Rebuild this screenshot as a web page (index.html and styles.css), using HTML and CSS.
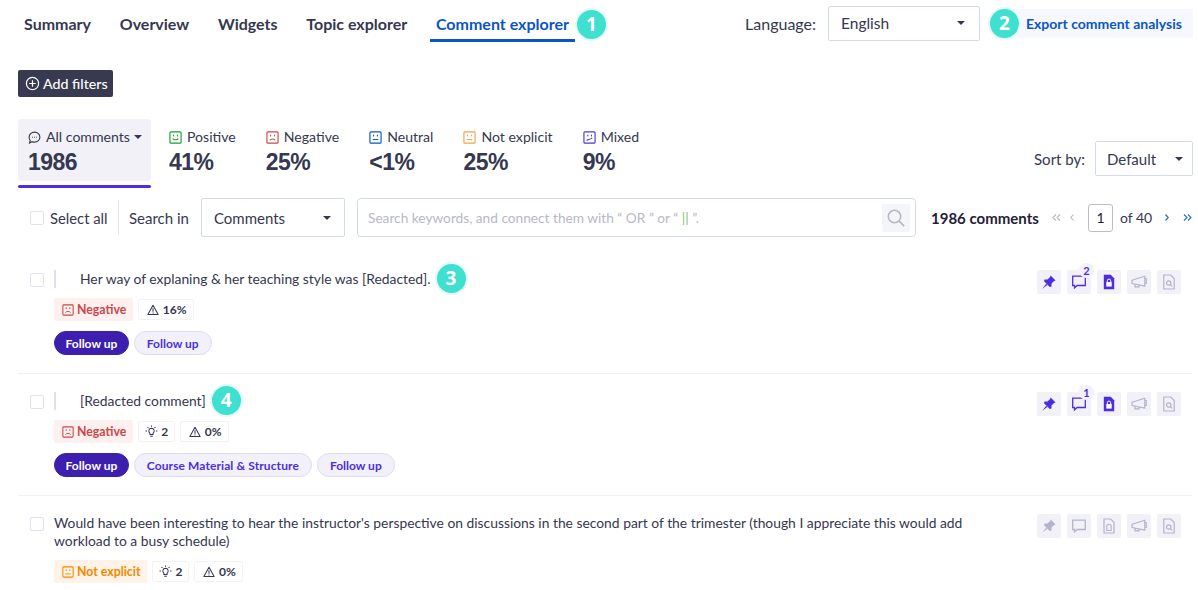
FILE: index.html
```html
<!DOCTYPE html>
<html lang="en">
<head>
<meta charset="utf-8">
<title>Comment explorer</title>
<link rel="stylesheet" href="styles.css">
</head>
<body>
<svg class="defs" width="0" height="0" aria-hidden="true">
  <symbol id="i-face-smile" viewBox="0 0 14 14"><rect x="1" y="1" width="12" height="12" rx="1" fill="none" stroke="currentColor" stroke-width="1.250"/><rect x="4.300" y="4" width="1.200" height="1.800" fill="currentColor"/><rect x="8.500" y="4" width="1.200" height="1.800" fill="currentColor"/><path d="M4 8.200c1 1.600 5 1.600 6 0" fill="none" stroke="currentColor" stroke-width="1.100"/></symbol>
  <symbol id="i-face-sad" viewBox="0 0 14 14"><rect x="1" y="1" width="12" height="12" rx="1" fill="none" stroke="currentColor" stroke-width="1.250"/><rect x="4.300" y="4" width="1.200" height="1.800" fill="currentColor"/><rect x="8.500" y="4" width="1.200" height="1.800" fill="currentColor"/><path d="M4 10c1-1.800 5-1.800 6 0" fill="none" stroke="currentColor" stroke-width="1.100"/></symbol>
  <symbol id="i-face-flat" viewBox="0 0 14 14"><rect x="1" y="1" width="12" height="12" rx="1" fill="none" stroke="currentColor" stroke-width="1.250"/><rect x="4.300" y="4" width="1.200" height="1.800" fill="currentColor"/><rect x="8.500" y="4" width="1.200" height="1.800" fill="currentColor"/><path d="M4 9.200h6" fill="none" stroke="currentColor" stroke-width="1.100"/></symbol>
  <symbol id="i-face-mixed" viewBox="0 0 14 14"><rect x="1" y="1" width="12" height="12" rx="1" fill="none" stroke="currentColor" stroke-width="1.250"/><rect x="4.600" y="4" width="1.200" height="1.800" fill="currentColor"/><rect x="8.500" y="4" width="1.200" height="1.800" fill="currentColor"/><path d="M3.800 10c1.200 0 1.600-1.200 3-1.200s1.800-.6 3.200-1.200" fill="none" stroke="currentColor" stroke-width="1.100"/></symbol>
  <symbol id="i-chat" viewBox="0 0 14 14"><path d="M7 1.200c3.300 0 5.800 2.400 5.800 5.400S10.300 12 7 12c-.9 0-1.700-.2-2.500-.5L1.600 12.800l.8-2.600C1.500 9.200 1.200 8 1.200 6.600 1.200 3.600 3.700 1.200 7 1.200z" fill="none" stroke="currentColor" stroke-width="1.200"/><path d="M4.300 6.700h1M6.500 6.700h1M8.700 6.700h1" stroke="currentColor" stroke-width="1"/></symbol>
  <symbol id="i-pin" viewBox="0 0 16 16"><path d="M9.600 1.500l5 5-1.500.6-2.600 2.500v3l-1.700.5L3 7.300l.5-1.800h3l2.600-2.500z" fill="currentColor"/><path d="M5.200 9.700L1.300 14.800l5-3.900z" fill="currentColor"/></symbol>
  <symbol id="i-bubble" viewBox="0 0 16 16"><path d="M1.700 2.200h12.600v9.300H6.200l-2.700 2.300v-2.300H1.700z" fill="none" stroke="currentColor" stroke-width="1.300"/></symbol>
  <symbol id="i-doc-lock" viewBox="0 0 16 16"><path d="M2.800.8h6.900l3.500 3.500v10.900H2.800z" fill="currentColor"/><path d="M5.300 8h5.400v4.600H5.300z" fill="#fff"/><path d="M6.300 8V6.800a1.700 1.700 0 013.400 0V8" fill="none" stroke="#fff" stroke-width="1"/></symbol>
  <symbol id="i-doc-lock-off" viewBox="0 0 16 16"><path d="M3 1h6.600L13 4.400V15H3z" fill="none" stroke="currentColor" stroke-width="1.200"/><path d="M5.800 12.500V8.400a2.200 2.200 0 014.400 0v4.100z" fill="none" stroke="currentColor" stroke-width="1.100"/></symbol>
  <symbol id="i-horn" viewBox="0 0 16 16"><path d="M1 6.200l12.800-4v10L1 9.500z" fill="none" stroke="currentColor" stroke-width="1.200" stroke-linejoin="round"/><path d="M13.800 4.500h1.400v5h-1.400M4 10v2.800h4V11" fill="none" stroke="currentColor" stroke-width="1.200"/></symbol>
  <symbol id="i-doc-find" viewBox="0 0 16 16"><path d="M2.800 1h6.900l3.500 3.500V15H2.800z" fill="none" stroke="currentColor" stroke-width="1.200"/><circle cx="7.700" cy="9" r="2.200" fill="none" stroke="currentColor" stroke-width="1.200"/><path d="M9.300 10.600l1.800 1.800" stroke="currentColor" stroke-width="1.300"/></symbol>
  <symbol id="i-warn" viewBox="0 0 14 14"><path d="M7 1.500l6 10.800H1z" fill="none" stroke="currentColor" stroke-width="1.200" stroke-linejoin="round"/><path d="M7 5v4M7 9.800v1.200" stroke="currentColor" stroke-width="1.200"/></symbol>
  <symbol id="i-bulb" viewBox="0 0 14 14"><path d="M7 3.400a3 3 0 011.700 5.400v1.500H5.300V8.800A3 3 0 017 3.400z" fill="none" stroke="currentColor" stroke-width="1.100"/><path d="M5.600 12h2.800M7 .5v1.500M2.700 2.200l1 1M11.300 2.200l-1 1M.6 6.400h1.500M11.900 6.400h1.500" stroke="currentColor" stroke-width="1.100"/></symbol>
  <symbol id="i-plus" viewBox="0 0 16 16"><circle cx="8" cy="8" r="6.500" fill="none" stroke="currentColor" stroke-width="1.300"/><path d="M8 4.500v7M4.500 8h7" stroke="currentColor" stroke-width="1.300"/></symbol>
  <symbol id="i-search" viewBox="0 0 20 20"><circle cx="8.500" cy="8.500" r="6.200" fill="none" stroke="currentColor" stroke-width="1.500"/><path d="M13 13l5.200 5.200" stroke="currentColor" stroke-width="1.700"/></symbol>
  <symbol id="i-first" viewBox="0 0 9 7"><path d="M4 .5L1 3.500l3 3M8 .5L5 3.500l3 3" fill="none" stroke="currentColor" stroke-width="1.100"/></symbol>
  <symbol id="i-prev" viewBox="0 0 4 7"><path d="M3.500.5L.8 3.500l2.700 3" fill="none" stroke="currentColor" stroke-width="1.100"/></symbol>
  <symbol id="i-next" viewBox="0 0 4 7"><path d="M.5.5l2.700 3-2.700 3" fill="none" stroke="currentColor" stroke-width="1.300"/></symbol>
  <symbol id="i-last" viewBox="0 0 9 7"><path d="M1 .5l3 3-3 3M5 .5l3 3-3 3" fill="none" stroke="currentColor" stroke-width="1.200"/></symbol>
</svg>

<main class="page">
  <header class="topbar">
    <nav class="tabs">
      <a class="tab">Summary</a>
      <a class="tab">Overview</a>
      <a class="tab">Widgets</a>
      <a class="tab">Topic explorer</a>
      <a class="tab tab-active">Comment explorer<span class="marker marker-tab">1</span></a>
    </nav>
    <div class="lang">
      <span class="lang-label">Language:</span>
      <div class="select select-lang"><span>English</span><i class="caret"></i></div>
      <a class="export"><span class="marker marker-export">2</span>Export comment analysis</a>
    </div>
  </header>

  <button class="add-filters"><svg class="ico-plus"><use href="#i-plus"/></svg>Add filters</button>

  <section class="stats">
    <div class="stat stat-all">
      <div class="stat-label"><svg class="ico-stat ink"><use href="#i-chat"/></svg>All comments<i class="caret caret-small"></i></div>
      <div class="stat-num">1986</div>
    </div>
    <div class="stat">
      <div class="stat-label"><svg class="ico-stat c-pos"><use href="#i-face-smile"/></svg>Positive</div>
      <div class="stat-num">41%</div>
    </div>
    <div class="stat">
      <div class="stat-label"><svg class="ico-stat c-neg"><use href="#i-face-sad"/></svg>Negative</div>
      <div class="stat-num">25%</div>
    </div>
    <div class="stat">
      <div class="stat-label"><svg class="ico-stat c-neu"><use href="#i-face-flat"/></svg>Neutral</div>
      <div class="stat-num">&lt;1%</div>
    </div>
    <div class="stat">
      <div class="stat-label"><svg class="ico-stat c-not"><use href="#i-face-flat"/></svg>Not explicit</div>
      <div class="stat-num">25%</div>
    </div>
    <div class="stat">
      <div class="stat-label"><svg class="ico-stat c-mix"><use href="#i-face-mixed"/></svg>Mixed</div>
      <div class="stat-num">9%</div>
    </div>
    <div class="sort">
      <span>Sort by:</span>
      <div class="select select-sort"><span>Default</span><i class="caret"></i></div>
    </div>
  </section>

  <section class="toolbar">
    <label class="check-all"><span class="check"></span>Select all</label>
    <span class="search-in">Search in</span>
    <div class="select select-in"><span>Comments</span><i class="caret"></i></div>
    <div class="search">
      <span class="search-hint">Search keywords, and connect them with “ OR ” or “ <b class="hint-or">||</b> ”.</span>
      <span class="search-btn"><svg class="ico-search"><use href="#i-search"/></svg></span>
    </div>
    <strong class="count">1986 comments</strong>
    <div class="pager">
      <svg class="chev-double pg-off"><use href="#i-first"/></svg>
      <svg class="chev-single pg-off pg-prev"><use href="#i-prev"/></svg>
      <span class="pg-box">1</span>
      <span class="pg-of">of</span>
      <span class="pg-total">40</span>
      <svg class="chev-single pg-on pg-next"><use href="#i-next"/></svg>
      <svg class="chev-double pg-on pg-last"><use href="#i-last"/></svg>
    </div>
  </section>

  <article class="row">
    <span class="check"></span>
    <div class="row-body">
      <p class="text text-quoted"><span>Her way of explaning &amp; her teaching style was [Redacted].<span class="marker marker-text">3</span></span></p>
      <div class="chips">
        <span class="chip chip-neg"><svg class="ico-chip"><use href="#i-face-sad"/></svg>Negative</span>
        <span class="chip chip-meta"><svg class="ico-warn"><use href="#i-warn"/></svg>16%</span>
      </div>
      <div class="tags">
        <span class="tag tag-solid">Follow up</span>
        <span class="tag">Follow up</span>
      </div>
    </div>
    <div class="actions">
      <span class="act act-on"><svg class="ico-act"><use href="#i-pin"/></svg></span>
      <span class="act act-on"><svg class="ico-act"><use href="#i-bubble"/></svg><em class="act-count">2</em></span>
      <span class="act act-on"><svg class="ico-act"><use href="#i-doc-lock"/></svg></span>
      <span class="act"><svg class="ico-act"><use href="#i-horn"/></svg></span>
      <span class="act"><svg class="ico-act"><use href="#i-doc-find"/></svg></span>
    </div>
  </article>

  <article class="row">
    <span class="check"></span>
    <div class="row-body">
      <p class="text text-quoted"><span>[Redacted comment]<span class="marker marker-text">4</span></span></p>
      <div class="chips">
        <span class="chip chip-neg"><svg class="ico-chip"><use href="#i-face-sad"/></svg>Negative</span>
        <span class="chip chip-meta"><svg class="ico-bulb"><use href="#i-bulb"/></svg>2</span>
        <span class="chip chip-meta"><svg class="ico-warn"><use href="#i-warn"/></svg>0%</span>
      </div>
      <div class="tags">
        <span class="tag tag-solid">Follow up</span>
        <span class="tag tag-long">Course Material &amp; Structure</span>
        <span class="tag">Follow up</span>
      </div>
    </div>
    <div class="actions">
      <span class="act act-on"><svg class="ico-act"><use href="#i-pin"/></svg></span>
      <span class="act act-on"><svg class="ico-act"><use href="#i-bubble"/></svg><em class="act-count">1</em></span>
      <span class="act act-on"><svg class="ico-act"><use href="#i-doc-lock"/></svg></span>
      <span class="act"><svg class="ico-act"><use href="#i-horn"/></svg></span>
      <span class="act"><svg class="ico-act"><use href="#i-doc-find"/></svg></span>
    </div>
  </article>

  <article class="row row-last">
    <span class="check"></span>
    <div class="row-body">
      <p class="text">Would have been interesting to hear the instructor's perspective on discussions in the second part of the trimester (though I appreciate this would add workload to a busy schedule)</p>
      <div class="chips">
        <span class="chip chip-not"><svg class="ico-chip"><use href="#i-face-flat"/></svg>Not explicit</span>
        <span class="chip chip-meta"><svg class="ico-bulb"><use href="#i-bulb"/></svg>2</span>
        <span class="chip chip-meta"><svg class="ico-warn"><use href="#i-warn"/></svg>0%</span>
      </div>
    </div>
    <div class="actions">
      <span class="act"><svg class="ico-act"><use href="#i-pin"/></svg></span>
      <span class="act"><svg class="ico-act"><use href="#i-bubble"/></svg></span>
      <span class="act"><svg class="ico-act"><use href="#i-doc-lock-off"/></svg></span>
      <span class="act"><svg class="ico-act"><use href="#i-horn"/></svg></span>
      <span class="act"><svg class="ico-act"><use href="#i-doc-find"/></svg></span>
    </div>
  </article>
</main>
</body>
</html>
```
FILE: styles.css
```css
* { box-sizing: border-box; }
html, body { margin: 0; padding: 0; height: 590px; overflow: hidden; background: #fff; }
body { font-family: Lato, "Liberation Sans", sans-serif; font-size: 14px; color: #353850; }
.defs { position: absolute; }
.page { padding: 0 6px 0 18px; }

.marker {
  position: absolute;
  width: 29px; height: 29px; border-radius: 50%;
  background: #40e0d0;
  box-shadow: 0 0 0 2px #e2fbf8;
  color: #fff;
  font: 700 19px/29px "Open Sans", "Liberation Sans", sans-serif;
  text-align: center;
}

.topbar { display: flex; justify-content: space-between; padding-top: 6px; }
.tabs { display: flex; gap: 16.75px; }
.tab {
  position: relative;
  display: block;
  height: 36px;
  padding: 9px 6px 0;
  font-size: 16px; font-weight: 700; line-height: 18px;
  color: #353850;
  border-bottom: 3px solid transparent;
}
.tab-active { color: #0b56c4; border-bottom-color: #0b56c4; }
.marker-tab { left: 147px; top: 4px; }

.lang { display: flex; align-items: flex-start; margin-right: -1px; }
.lang-label { font-size: 16px; line-height: 36px; margin-right: 12px; }
.select {
  display: flex; align-items: center; justify-content: space-between;
  height: 35px;
  border: 1px solid #d3dbe8; border-radius: 2px;
  background: #fff;
  font-size: 15.5px;
}
.select-lang { width: 152px; padding: 0 14px 2px 12px; }
.caret {
  display: block; width: 0; height: 0;
  border-left: 4px solid transparent; border-right: 4px solid transparent;
  border-top: 4px solid #353850;
}
.caret-small { margin-left: 4px; }
.export {
  position: relative;
  width: 188px; height: 29px;
  margin: 3px 0 0 25px;
  padding-left: 21px;
  background: #f6f8fd;
  color: #0b56c4;
  font-size: 14px; font-weight: 700; line-height: 29px;
}
.marker-export { left: -15px; top: 0; }

.add-filters {
  display: flex; align-items: center; gap: 3px;
  width: 95px; height: 27px;
  margin: 28px 0 22px;
  padding: 0 0 0 7px;
  border: 0; border-radius: 2px;
  background: #373a50;
  color: #fff;
  font: 500 14.2px Lato, sans-serif;
}
.ico-plus { width: 15px; height: 15px; }

.stats { display: flex; gap: 30px; align-items: flex-start; height: 69px; }
.stat { padding-top: 9px; }
.stat-all {
  position: relative;
  width: 133px; height: 62px;
  margin-right: -12px;
  padding-left: 10px;
  border-radius: 4px;
  background: #f1f1f7;
}
.stat-all::after {
  content: ""; position: absolute; left: 0; right: 0; top: 66px; height: 3px;
  background: #4a2fe0; border-radius: 2px;
}
.stat-label { display: flex; align-items: center; font-size: 14.1px; line-height: 18px; white-space: nowrap; }
.ico-stat { width: 13px; height: 13px; margin-right: 5px; }
.ink { color: #353850; }
.c-pos { color: #16a030; }
.c-neg { color: #c9484a; }
.c-neu { color: #0b56c4; }
.c-not { color: #f0a24a; }
.c-mix { color: #4a3ad8; }
.stat-num { margin-top: 3px; font: 700 23px/26px "Liberation Sans", Arial, sans-serif; letter-spacing: -.5px; color: #353850; }
.sort { display: flex; align-items: center; gap: 10px; margin: 22px -1px 0 auto; font-size: 15px; }
.select-sort { width: 98px; padding: 0 9px 0 11px; font-size: 15px; }

.toolbar { display: flex; align-items: center; height: 39px; margin: 10px 0 15px; padding-left: 12px; }
.check { display: block; flex: none; width: 14px; height: 14px; border: 1px solid #dfe1ef; border-radius: 2px; background: #fff; }
.check-all { display: flex; align-items: center; gap: 6px; width: 89px; height: 34px; border-right: 1px solid #dfe4ee; font-size: 14.8px; white-space: nowrap; }
.search-in { width: 60px; margin: 0 12px 0 10px; font-size: 15px; white-space: nowrap; }
.select-in { flex: none; width: 144px; height: 39px; padding: 0 13px 0 12px; font-size: 15px; }
.search {
  display: flex; flex: none; align-items: center; justify-content: space-between;
  width: 559px; height: 39px;
  margin-left: 12px; padding: 0 5px 0 10px;
  border: 1px solid #d3dbe8; border-radius: 4px;
}
.search-hint { font-size: 13.7px; color: #b7b9c4; }
.hint-or { font-weight: 400; color: #7cc47c; }
.search-btn { display: flex; align-items: center; justify-content: center; width: 28px; height: 28px; background: #f4f5fa; border-radius: 2px; }
.ico-search { width: 20px; height: 20px; color: #b5b7c0; }
.count { width: 107px; margin-left: 15px; font-size: 15px; font-weight: 700; color: #1f2238; white-space: nowrap; }
.pager { display: flex; align-items: center; margin-left: 14px; font-size: 14px; }
.chev-double { flex: none; width: 9px; height: 7px; }
.chev-single { flex: none; width: 4px; height: 7px; }
.pg-off { color: #b5b7c6; }
.pg-on { color: #2d70c8; }
.pg-prev { margin-left: 9px; }
.pg-box {
  flex: none; width: 25px; height: 28px; margin-left: 14px;
  border: 1px solid #b9bdcd; border-radius: 3px;
  line-height: 26px; text-align: center; color: #1f2238;
}
.pg-of { width: 11px; margin-left: 7px; }
.pg-total { width: 16px; margin-left: 5px; }
.pg-next { margin-left: 13px; }
.pg-last { margin-left: 14px; }

.row { display: flex; align-items: flex-start; padding: 18px 11px 18px 12px; border-bottom: 1px solid #f0f0f6; }
.row > .check { margin: 3px 10px 0 0; }
.row-last { border-bottom: 0; }
.row-body { flex: 1; min-width: 0; }
.text { width: 925px; margin: 0; font-size: 13.85px; line-height: 18px; }
.text-quoted { padding-left: 24px; border-left: 2px solid #dfdff0; }
.text-quoted > span { position: relative; }
.marker-text { margin-left: 6px; top: -6px; }

.chips { display: flex; align-items: center; gap: 5px; margin-top: 10px; }
.chip { display: flex; align-items: center; height: 23px; font-size: 12.3px; border-radius: 2px; font-weight: 700; white-space: nowrap; }
.ico-chip { width: 12px; height: 12px; margin-right: 3px; }
.chip-neg { padding: 0 7px 0 8px; background: #fdf0ef; color: #c9484a; }
.chip-not { padding: 0 7px 0 8px; background: #fef3e6; color: #f08a00; }
.chip-meta { height: 21px; padding: 0 6px 0 8px; border: 1px solid #f3f3f7; color: #353850; font-size: 12px; }
.ico-warn { width: 12px; height: 12px; margin-right: 3.500px; }
.ico-bulb { width: 13px; height: 13px; margin: 0 3px 0 -2px; }

.tags { display: flex; gap: 5px; margin-top: 10px; }
.tag {
  display: block; height: 24px; padding: 0 12px;
  border: 1px solid #dedcf0; border-radius: 12px;
  background: #f2f1fa;
  color: #4a2fe0;
  font-size: 12px; font-weight: 700; line-height: 23px;
  white-space: nowrap;
}
.tag-long { letter-spacing: .1px; }
.tag-solid { padding: 0 10.500px; border-color: #3d1fb0; background: #3d1fb0; color: #fff; }

.actions { display: flex; gap: 6px; flex: none; }
.act {
  position: relative;
  display: flex; align-items: center; justify-content: center;
  width: 24px; height: 24px;
  border-radius: 2px;
  background: #f1f1f7;
  color: #b3b3cc;
}
.act-on { color: #4a2fe0; }
.ico-act { width: 16px; height: 16px; }
.act-count {
  position: absolute; right: -3px; top: -7px;
  width: 15px; height: 15px; border-radius: 50%;
  background: #f1f1f7;
  font-size: 11px; font-style: normal; font-weight: 700; line-height: 15px; text-align: center;
}
```
